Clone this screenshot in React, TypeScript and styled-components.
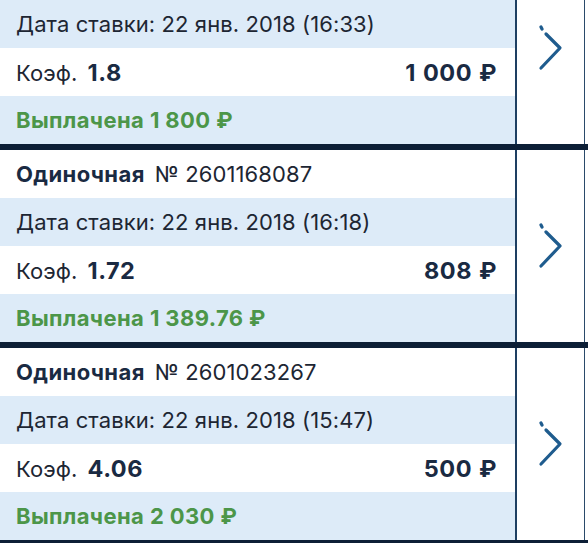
import React from "react";
import styled, { createGlobalStyle } from "styled-components";

const Global = createGlobalStyle`
  html, body { margin: 0; padding: 0; background: #ffffff; }
  body { width: 588px; height: 543px; overflow: hidden; font-family: Inter, Roboto, "Noto Sans", sans-serif; }
`;

const Viewport = styled.div`
  width: 588px;
  height: 543px;
  overflow: hidden;
  background: #ffffff;
`;

const List = styled.div`
  display: flex;
  flex-direction: column;
`;

const Card = styled.div`
  display: grid;
  grid-template-columns: 515px 70px 3px;
  border-bottom: 6px solid #0d1f36;
`;

const Body = styled.div`
  display: flex;
  flex-direction: column;
`;

const Row = styled.div<{ $tint?: boolean }>`
  height: 48px;
  display: flex;
  align-items: center;
  justify-content: space-between;
  padding: 0 18px 0 16px;
  background: ${(p) => (p.$tint ? "#ddebf8" : "#ffffff")};
  color: #1d2633;
  font-size: 22px;
  letter-spacing: 0.1px;
  white-space: nowrap;
`;

const Strong = styled.span`
  font-weight: 700;
  letter-spacing: 0.4px;
  color: #1a2a42;
`;

const Label = styled.span`
  display: inline-flex;
  align-items: baseline;
  gap: 10px;
`;

const Value = styled.span`
  font-weight: 700;
  font-size: 23.5px;
  letter-spacing: 0.5px;
  color: #1a2a42;
`;

const Amount = styled.span`
  font-weight: 700;
  font-size: 23.5px;
  letter-spacing: 0.5px;
  word-spacing: 1px;
  color: #1a2a42;
`;

const Paid = styled.span`
  font-weight: 700;
  letter-spacing: 0.4px;
  color: #4c9649;
`;

const Arrow = styled.div<{ $cut?: boolean }>`
  border-left: 2px solid #1e3f62;
  border-right: 1px solid #2a4a6a;
  display: flex;
  align-items: center;
  justify-content: center;
  padding-bottom: ${(p) => (p.$cut ? "48px" : "0")};
  background: #ffffff;
`;

const Edge = styled.div`
  background: #ffffff;
`;

const Chevron = () => (
  <svg width="26" height="46" viewBox="0 0 26 46" fill="none">
    <path d="M3 2 L4 4" stroke="#1f5c8e" strokeWidth="3.2" strokeLinecap="round" />
    <path d="M8 9 L22 23 L3 43" stroke="#1f5c8e" strokeWidth="3.2" strokeLinecap="round" strokeLinejoin="round" />
  </svg>
);

type Bet = { no?: string; date: string; coef: string; stake: string; paid: string };

const bets: Bet[] = [
  { date: "22 янв. 2018 (16:33)", coef: "1.8", stake: "1 000 ₽", paid: "1 800 ₽" },
  { no: "2601168087", date: "22 янв. 2018 (16:18)", coef: "1.72", stake: "808 ₽", paid: "1 389.76 ₽" },
  { no: "2601023267", date: "22 янв. 2018 (15:47)", coef: "4.06", stake: "500 ₽", paid: "2 030 ₽" },
];

const BetCard = ({ bet }: { bet: Bet }) => (
  <Card>
    <Body>
      {bet.no && (
        <Row>
          <Label>
            <Strong>Одиночная</Strong>
            <span>№ {bet.no}</span>
          </Label>
        </Row>
      )}
      <Row $tint>
        <span>Дата ставки: {bet.date}</span>
      </Row>
      <Row>
        <Label>
          <span>Коэф.</span>
          <Value>{bet.coef}</Value>
        </Label>
        <Amount>{bet.stake}</Amount>
      </Row>
      <Row $tint>
        <Paid>Выплачена {bet.paid}</Paid>
      </Row>
    </Body>
    <Arrow $cut={!bet.no}>
      <Chevron />
    </Arrow>
    <Edge />
  </Card>
);

export default function App() {
  return (
    <Viewport>
      <Global />
      <List>
        {bets.map((b, i) => (
          <BetCard key={i} bet={b} />
        ))}
      </List>
    </Viewport>
  );
}
